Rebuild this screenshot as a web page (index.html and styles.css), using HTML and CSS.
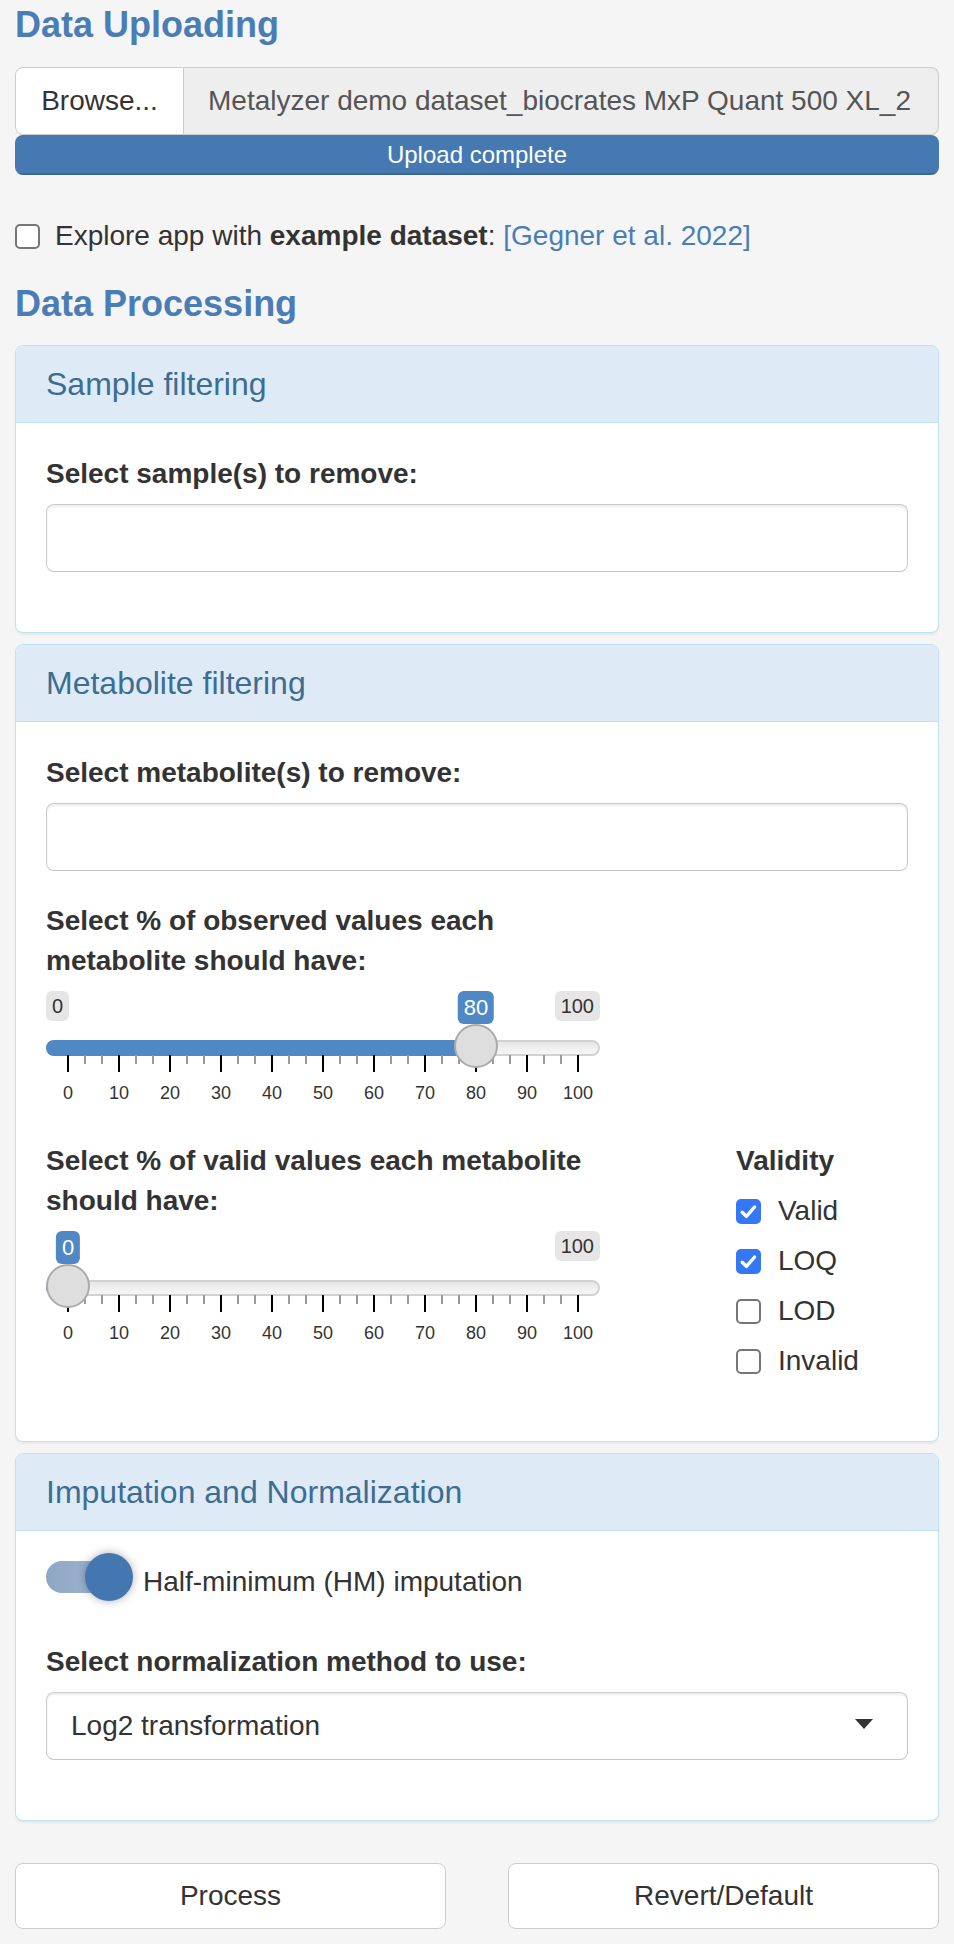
FILE: index.html
```html
<!DOCTYPE html>
<html lang="en">
<head>
<meta charset="utf-8">
<title>Metalyzer - Data</title>
<link rel="stylesheet" href="styles.css">
</head>
<body>
<div class="page">
  <h4 class="section-title upload">Data Uploading</h4>
  <div class="file-group">
    <span class="browse">Browse...</span>
    <span class="file-name">Metalyzer demo dataset_biocrates MxP Quant 500 XL_2</span>
  </div>
  <div class="progress"><div class="progress-bar" style="width:100%">Upload complete</div></div>

  <div class="check example">
    <span class="cb"></span>
    <span class="check-text">Explore app with <b>example dataset</b>: <a class="ref">[Gegner et al. 2022]</a></span>
  </div>

  <h4 class="section-title processing">Data Processing</h4>

  <section class="panel">
    <div class="panel-heading"><h3 class="panel-title">Sample filtering</h3></div>
    <div class="panel-body">
      <div class="form-group">
        <label class="control-label">Select sample(s) to remove:</label>
        <div class="form-control"></div>
      </div>
    </div>
  </section>

  <section class="panel">
    <div class="panel-heading"><h3 class="panel-title">Metabolite filtering</h3></div>
    <div class="panel-body">
      <div class="form-group">
        <label class="control-label">Select metabolite(s) to remove:</label>
        <div class="form-control"></div>
      </div>

      <div class="form-group slider-group">
        <label class="control-label">Select % of observed values each metabolite should have:</label>
        <div class="irs">
          <div class="irs-line"></div>
          <div class="irs-bar" style="width:430px"></div>
          <div class="irs-grid">
            <div class="irs-ticks"></div>
            <div class="irs-grid-texts">
              <span class="gt"><span>0</span></span><span class="gt"><span>10</span></span><span class="gt"><span>20</span></span><span class="gt"><span>30</span></span><span class="gt"><span>40</span></span><span class="gt"><span>50</span></span><span class="gt"><span>60</span></span><span class="gt"><span>70</span></span><span class="gt"><span>80</span></span><span class="gt"><span>90</span></span><span class="gt"><span>100</span></span>
            </div>
          </div>
          <span class="irs-min">0</span>
          <span class="irs-max">100</span>
          <span class="irs-single" style="left:430px">80</span>
          <span class="irs-handle" style="left:408px"></span>
        </div>
      </div>

      <div class="split">
        <div class="form-group slider-group">
          <label class="control-label">Select % of valid values each metabolite should have:</label>
          <div class="irs">
            <div class="irs-line"></div>
            <div class="irs-bar" style="width:22px"></div>
            <div class="irs-grid">
              <div class="irs-ticks"></div>
              <div class="irs-grid-texts">
                <span class="gt"><span>0</span></span><span class="gt"><span>10</span></span><span class="gt"><span>20</span></span><span class="gt"><span>30</span></span><span class="gt"><span>40</span></span><span class="gt"><span>50</span></span><span class="gt"><span>60</span></span><span class="gt"><span>70</span></span><span class="gt"><span>80</span></span><span class="gt"><span>90</span></span><span class="gt"><span>100</span></span>
              </div>
            </div>
            <span class="irs-max">100</span>
            <span class="irs-single" style="left:22px">0</span>
            <span class="irs-handle" style="left:0px"></span>
          </div>
        </div>

        <div class="form-group validity">
          <label class="control-label">Validity</label>
          <div class="options">
            <div class="check opt"><span class="cb on"><svg viewBox="0 0 25 25" width="25" height="25"><path d="M6.2 13.2 L10.4 17.4 L18.6 8" fill="none" stroke="#fff" stroke-width="3.4" stroke-linecap="round" stroke-linejoin="round"/></svg></span><span class="check-text">Valid</span></div>
            <div class="check opt"><span class="cb on"><svg viewBox="0 0 25 25" width="25" height="25"><path d="M6.2 13.2 L10.4 17.4 L18.6 8" fill="none" stroke="#fff" stroke-width="3.4" stroke-linecap="round" stroke-linejoin="round"/></svg></span><span class="check-text">LOQ</span></div>
            <div class="check opt"><span class="cb"></span><span class="check-text">LOD</span></div>
            <div class="check opt"><span class="cb"></span><span class="check-text">Invalid</span></div>
          </div>
        </div>
      </div>
    </div>
  </section>

  <section class="panel">
    <div class="panel-heading"><h3 class="panel-title">Imputation and Normalization</h3></div>
    <div class="panel-body">
      <div class="switch-row">
        <span class="switch"><span class="switch-track"></span><span class="switch-knob"></span></span>
        <span class="switch-label">Half-minimum (HM) imputation</span>
      </div>
      <div class="form-group">
        <label class="control-label">Select normalization method to use:</label>
        <div class="form-control select">
          <span class="select-value">Log2 transformation</span>
          <span class="caret"></span>
        </div>
      </div>
    </div>
  </section>

  <div class="actions">
    <button class="btn">Process</button>
    <button class="btn">Revert/Default</button>
  </div>
</div>
</body>
</html>
```

FILE: styles.css
```css
* { box-sizing: border-box; }

body {
  margin: 0;
  background: #f5f5f5;
  font-family: "Liberation Sans", Arial, Helvetica, sans-serif;
  font-size: 28px;
  line-height: 40px;
  color: #333;
}

.page {
  padding: 0 15px 15px;
}

.section-title {
  margin: 0;
  font-size: 36px;
  line-height: 40px;
  font-weight: 700;
  color: #4a7db5;
}
.section-title.upload { margin: 5px 0 22px; }
.section-title.processing { margin: 28px 0 21px; }

/* file input */
.file-group {
  display: flex;
  height: 68px;
}
.browse {
  flex: none;
  width: 169px;
  background: #fff;
  border: 1px solid #ccc;
  border-radius: 8px 0 0 8px;
  display: flex;
  align-items: center;
  justify-content: center;
  color: #333;
}
.file-name {
  flex: 1;
  min-width: 0;
  background: #eee;
  border: 1px solid #ccc;
  border-left: none;
  border-radius: 0 8px 8px 0;
  padding: 0 24px;
  display: flex;
  align-items: center;
  white-space: nowrap;
  overflow: hidden;
  color: #555;
}
.progress {
  height: 40px;
  border-radius: 8px;
  overflow: hidden;
  background: #f5f5f5;
}
.progress-bar {
  height: 100%;
  background: #4679b1;
  color: #fff;
  font-size: 24px;
  line-height: 40px;
  text-align: center;
  box-shadow: inset 0 -2px 0 rgba(0, 0, 0, 0.15);
}

/* checkboxes */
.check {
  display: flex;
  align-items: center;
  height: 40px;
}
.check.example { margin-top: 41px; }
.check.example .cb { margin-right: 15px; }
.cb {
  flex: none;
  width: 25px;
  height: 25px;
  border: 2px solid #767676;
  border-radius: 5px;
  background: #fff;
  display: block;
  position: relative;
}
.cb.on {
  background: #3478f6;
  border-color: #3478f6;
}
.cb svg {
  display: block;
  margin: -2px;
}
.ref { color: #4a7db5; text-decoration: none; }

/* panels */
.panel {
  background: #fff;
  border: 1px solid #bfe3ee;
  border-radius: 8px;
  box-shadow: 0 2px 2px rgba(0, 0, 0, 0.05);
  margin-bottom: 11px;
  overflow: hidden;
}
.panel-heading {
  background: #deebf6;
  border-bottom: 1px solid #bfe3ee;
  padding: 20px 30px;
}
.panel-title {
  margin: 0;
  font-size: 32px;
  line-height: 36px;
  font-weight: 400;
  color: #3d6d92;
}
.panel-body {
  padding: 31px 30px 30px;
}

.form-group { margin-bottom: 30px; }
.control-label {
  display: block;
  font-weight: 700;
  margin-bottom: 10px;
}
.form-control {
  height: 68px;
  background: #fff;
  border: 1px solid #ccc;
  border-bottom-color: #c4c4c4;
  border-radius: 8px;
  box-shadow: inset 0 2px 2px rgba(0, 0, 0, 0.075);
}

/* sliders */
.slider-group { width: 554px; }
.irs {
  position: relative;
  height: 120px;
}
.irs-line {
  position: absolute;
  left: 0;
  right: 0;
  top: 49px;
  height: 16px;
  border: 2px solid #d2d2d2;
  border-radius: 8px;
  background: linear-gradient(to bottom, #dedede -50%, #fff 150%);
}
.irs-bar {
  position: absolute;
  left: 0;
  top: 49px;
  height: 16px;
  background: #5088c5;
  border-radius: 8px 0 0 8px;
}
.irs-grid {
  position: absolute;
  left: 21px;
  top: 64px;
  width: 512px;
}
.irs-ticks {
  height: 17px;
  background-image:
    repeating-linear-gradient(to right, #000 0 2px, transparent 2px 51px),
    repeating-linear-gradient(to right, #999 0 2px, transparent 2px 17px);
  background-size: 512px 17px, 512px 9px;
  background-repeat: no-repeat;
}
.irs-grid-texts {
  display: flex;
  justify-content: space-between;
  margin-top: 12px;
  font-size: 18px;
  line-height: 18px;
  color: #333;
}
.gt {
  width: 2px;
  display: flex;
  justify-content: center;
  white-space: nowrap;
}
.irs-min,
.irs-max {
  position: absolute;
  top: 0;
  font-size: 20px;
  line-height: 26px;
  padding: 2px 6px;
  background: #e6e6e6;
  border-radius: 6px;
  color: #333;
}
.irs-min { left: 0; }
.irs-max { right: 0; }
.irs-single {
  position: absolute;
  top: 0;
  font-size: 22px;
  line-height: 29px;
  padding: 2px 6px;
  background: #5088c5;
  color: #fff;
  border-radius: 6px;
  transform: translateX(-50%);
}
.irs-handle {
  position: absolute;
  top: 33px;
  width: 44px;
  height: 44px;
  border: 2px solid #ababab;
  background: #dedede;
  border-radius: 50%;
}

.split {
  display: grid;
  grid-template-columns: 690px 1fr;
}
.options .opt { margin-bottom: 10px; }
.options .opt:last-child { margin-bottom: 0; }
.opt .cb { margin-right: 17px; }

/* switch */
.switch-row {
  display: flex;
  align-items: flex-start;
  margin-bottom: 40px;
}
.switch {
  position: relative;
  flex: none;
  width: 87px;
  height: 40px;
  margin-right: 10px;
}
.switch-track {
  display: block;
  width: 80px;
  height: 32px;
  margin-top: -1px;
  border-radius: 16px;
  background: linear-gradient(to right, #8ea6c5, #a8bcd4);
}
.switch-knob {
  position: absolute;
  top: -9px;
  left: 39px;
  width: 48px;
  height: 48px;
  border-radius: 50%;
  background: #4477b0;
  box-shadow: 0 0 10px rgba(0, 0, 0, 0.3);
}

.select {
  display: flex;
  align-items: center;
  padding: 0 34px 0 24px;
}
.caret {
  margin-left: auto;
  margin-top: -4px;
  width: 0;
  height: 0;
  border-top: 10px solid #333;
  border-left: 9.5px solid transparent;
  border-right: 9.5px solid transparent;
}

/* buttons */
.actions {
  display: grid;
  grid-template-columns: 1fr 1fr;
  gap: 62px;
  margin-top: 42px;
}
.btn {
  height: 66px;
  background: #fff;
  border: 1px solid #ccc;
  border-radius: 8px;
  font: inherit;
  color: #333;
  padding: 0 24px;
}
```
